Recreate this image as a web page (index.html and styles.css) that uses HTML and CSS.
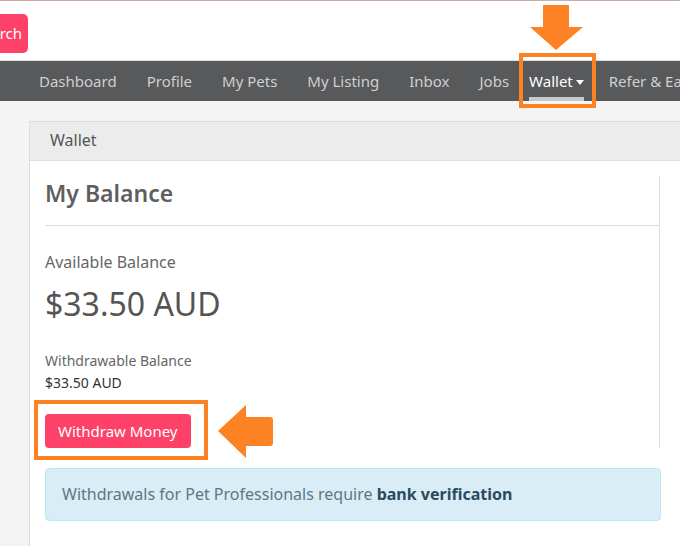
FILE: index.html
```html
<!DOCTYPE html>
<html lang="en">
<head>
    <meta charset="UTF-8">
    <meta name="viewport" content="width=device-width, initial-scale=1.0">
    <title>Wallet</title>
    <link rel="stylesheet" href="styles.css">
</head>
<body>
    <header class="top-bar">
        <div class="search-wrap">
            <button class="btn-search">Search</button>
        </div>
    </header>
    <nav class="main-nav">
        <ul>
            <li><a href="#">Dashboard</a></li>
            <li><a href="#">Profile</a></li>
            <li><a href="#">My Pets</a></li>
            <li><a href="#">My Listing</a></li>
            <li><a href="#">Inbox</a></li>
            <li><a href="#">Jobs</a></li>
            <li class="active"><a href="#">Wallet <span class="caret"></span></a></li>
            <li><a href="#">Refer &amp; Earn</a></li>
        </ul>
    </nav>

    <main>
        <section class="panel">
            <div class="panel-heading">Wallet</div>
            <div class="panel-body">
                <div class="balance-col">
                    <h2>My Balance</h2>
                    <p class="label">Available Balance</p>
                    <p class="amount">$33.50 AUD</p>
                    <p class="small-label">Withdrawable Balance</p>
                    <p class="small-amount">$33.50 AUD</p>
                    <button class="btn-withdraw">Withdraw Money</button>
                </div>
                <div class="alert-info">
                    Withdrawals for Pet Professionals require <strong>bank verification</strong>
                </div>
            </div>
        </section>
    </main>

    <!-- annotation marks -->
    <div class="mark mark-wallet"></div>
    <div class="mark mark-withdraw"></div>
    <svg class="arrow arrow-down" width="54" height="46" viewBox="0 0 54 46">
        <path d="M13 0 H39 V22 H53 L26 45 L0 22 H13 Z" fill="#fd8224"/>
    </svg>
    <svg class="arrow arrow-left" width="56" height="54" viewBox="0 0 56 54">
        <path d="M0 26 L28 0 V12 H52 Q55 12 55 15 V38 Q55 41 52 41 H28 V53 Z" fill="#fd8224"/>
    </svg>
</body>
</html>
```

FILE: styles.css
```css
body {
    font-family: "Noto Sans", "Open Sans", sans-serif;
    margin: 0;
    padding: 0;
    background-color: #f4f4f4;
    overflow: hidden;
    height: 546px;
    position: relative;
}
.top-bar {
    background-color: #fff;
    border-top: 1px solid #c9aca5;
    height: 59px;
    display: flex;
    align-items: center;
}
.search-wrap {
    width: 28px;
    display: flex;
    justify-content: flex-end;
    margin-top: 5px;
}
.btn-search {
    flex-shrink: 0;
    background-color: #fe4169;
    color: #fff;
    border: none;
    border-radius: 5px;
    height: 39px;
    padding: 0 6px 0 14px;
    font-family: inherit;
    font-size: 15px;
}
.main-nav {
    background-color: #58595b;
    border-top: 1px solid #ddd;
    height: 40px;
}
.main-nav ul {
    list-style: none;
    margin: 0;
    padding: 0 0 0 24px;
    display: flex;
    white-space: nowrap;
}
.main-nav li a {
    display: block;
    height: 40px;
    line-height: 40px;
    padding: 0 15px;
    color: #cfcfcf;
    text-decoration: none;
    font-size: 15px;
}
.main-nav li.active a {
    color: #fff;
    padding: 0 10px 0 5px;
    position: relative;
}
.main-nav li.active a::after {
    content: "";
    position: absolute;
    left: 5px;
    right: 10px;
    bottom: 0;
    height: 4px;
    background-color: #c8c8c8;
}
.caret {
    display: inline-block;
    width: 0;
    height: 0;
    border-left: 4px solid transparent;
    border-right: 4px solid transparent;
    border-top: 5px solid #fff;
    vertical-align: middle;
    margin-left: -1px;
}
main {
    padding: 20px 0 0 29px;
}
.panel {
    background-color: #fff;
    border: 1px solid #ddd;
    border-right: none;
    height: 500px;
}
.panel-heading {
    background-color: #ececec;
    border-bottom: 1px solid #ddd;
    height: 38px;
    line-height: 36px;
    padding-left: 20px;
    color: #555;
    font-size: 16px;
}
.panel-body {
    padding: 15px 0 0 15px;
}
.balance-col {
    width: 614px;
    border-right: 1px solid #ddd;
    padding-bottom: 0;
}
.balance-col h2 {
    margin: 0;
    height: 49px;
    line-height: 34px;
    font-size: 23px;
    font-weight: 600;
    color: #5f5f5f;
    border-bottom: 1px solid #ddd;
}
.label {
    margin: 26px 0 0;
    font-size: 16px;
    line-height: 20px;
    color: #666;
}
.amount {
    margin: 14px 0 0;
    font-size: 32px;
    line-height: 36px;
    color: #555;
}
.small-label {
    margin: 30px 0 0;
    font-size: 14px;
    line-height: 18px;
    color: #666;
}
.small-amount {
    margin: 4px 0 0;
    font-size: 14px;
    line-height: 18px;
    color: #333;
}
.btn-withdraw {
    margin-top: 22px;
    background-color: #fe4169;
    color: #fff;
    border: none;
    border-radius: 4px;
    height: 34px;
    padding: 0 13px;
    font-family: inherit;
    font-size: 15px;
    display: block;
}
.alert-info {
    margin-top: 20px;
    width: 582px;
    height: 51px;
    line-height: 51px;
    padding: 0 16px;
    background-color: #d9edf7;
    border: 1px solid #bce8f1;
    border-radius: 4px;
    color: #5f7784;
    font-size: 16px;
}
.alert-info strong {
    color: #2c4a5e;
}
.mark {
    position: absolute;
    border: 4px solid #fd8224;
}
.mark-wallet {
    left: 519px;
    top: 53px;
    width: 69px;
    height: 47px;
}
.mark-withdraw {
    left: 34px;
    top: 400px;
    width: 166px;
    height: 52px;
}
.arrow {
    position: absolute;
}
.arrow-down {
    left: 530px;
    top: 5px;
}
.arrow-left {
    left: 218px;
    top: 405px;
}
```
